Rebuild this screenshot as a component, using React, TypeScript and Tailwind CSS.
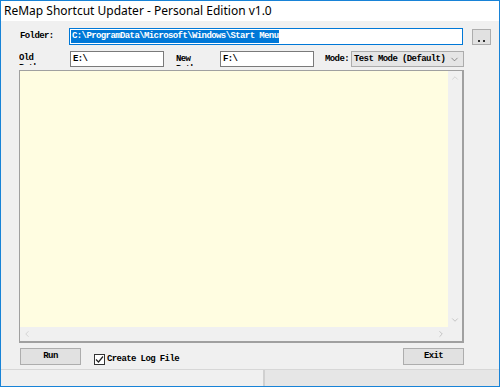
import { ChevronDown, ChevronUp, ChevronLeft, ChevronRight } from "lucide-react";

const mono = "font-['Liberation_Mono',monospace] text-[9px] font-bold tracking-[-0.6px] text-black";

export default function App() {
  return (
    <div className="w-[500px] h-[387px] border border-[#1883d7] bg-[#f0f0f0] flex flex-col overflow-hidden">
      {/* title bar */}
      <div className="h-[20px] bg-white flex items-center pl-[3px]">
        <span className="font-['Noto_Sans',sans-serif] text-[12px] leading-none text-black">
          ReMap Shortcut Updater - Personal Edition v1.0
        </span>
      </div>

      <div className="flex flex-col pl-[18px] grow">
        {/* folder row */}
        <div className="flex mt-[7px] h-[17px]">
          <div className={`${mono} w-[50px] pt-[4px] pl-[1px] leading-none`}>Folder:</div>
          <div className="w-[394px] h-[17px] bg-white border border-[#0078d7] flex items-center pl-[1px]">
            <span className={`${mono} bg-[#0078d7] leading-[13px] px-[1px]`}>
              <span className="text-white">C:\ProgramData\Microsoft\Windows\Start Menu</span>
            </span>
          </div>
          <button className="ml-[9px] mt-[1px] w-[19px] h-[16px] bg-[#e1e1e1] border border-[#adadad] flex items-end justify-center pb-[2px]">
            <span className="flex gap-[3px]">
              <span className="w-[2px] h-[2px] bg-[#333]" />
              <span className="w-[2px] h-[2px] bg-[#333]" />
            </span>
          </button>
        </div>

        {/* second row */}
        <div className="flex mt-[6px] h-[16px]">
          <div className="w-[51px] h-[16px]">
            <div className={`${mono} w-[24px] h-[14px] pt-[2px] leading-[10px] overflow-hidden`}>Old Path</div>
          </div>
          <div className="w-[94px] h-[16px] bg-white border border-[#7a7a7a] flex items-center pl-[2px]">
            <span className={`${mono} leading-none`}>E:\</span>
          </div>
          <div className="ml-[12px] w-[44px] h-[16px]">
            <div className={`${mono} w-[24px] h-[15px] pt-[3px] leading-[10px] overflow-hidden`}>New Path</div>
          </div>
          <div className="w-[94px] h-[16px] bg-white border border-[#7a7a7a] flex items-center pl-[2px]">
            <span className={`${mono} leading-none`}>F:\</span>
          </div>
          <div className={`${mono} ml-[11px] w-[26px] pt-[4px] leading-none`}>Mode:</div>
          <div className="w-[113px] h-[16px] bg-[#e5e5e5] border border-[#acacac] flex items-center justify-between pl-[2px] pr-[3px]">
            <span className={`${mono} leading-none`}>Test Mode (Default)</span>
            <ChevronDown size={11} strokeWidth={1.5} className="text-[#606060]" />
          </div>
        </div>

        {/* log area */}
        <div className="mt-[3px] w-[445px] h-[273px] border border-[#a0a0a0] border-b-2 border-r-2 bg-[#f0f0f0] grid grid-cols-[1fr_14px] grid-rows-[1fr_14px]">
          <div className="bg-[#fffde1]" />
          <div className="flex flex-col justify-between items-center py-[2px]">
            <ChevronUp size={10} strokeWidth={1.5} className="text-[#c2c2c2]" />
            <ChevronDown size={10} strokeWidth={1.5} className="text-[#a8a8a8]" />
          </div>
          <div className="flex justify-between items-center px-[2px]">
            <ChevronLeft size={10} strokeWidth={1.5} className="text-[#c2c2c2]" />
            <ChevronRight size={10} strokeWidth={1.5} className="text-[#a8a8a8]" />
          </div>
          <div className="bg-[#f0f0f0]" />
        </div>

        {/* buttons */}
        <div className="flex mt-[5px] h-[17px] items-start">
          <button className="ml-[1px] w-[61px] h-[17px] bg-[#e1e1e1] border border-[#adadad] flex items-center justify-center">
            <span className={`${mono} leading-none`}>Run</span>
          </button>
          <div className="ml-[13px] mt-[6px] flex items-center">
            <span className="w-[11px] h-[11px] border border-[#333] bg-white flex items-center justify-center">
              <svg width="9" height="9" viewBox="0 0 9 9">
                <path d="M1 4.5 L3.5 7 L8 1.5" fill="none" stroke="#222" strokeWidth="1.2" />
              </svg>
            </span>
            <span className={`${mono} leading-none ml-[2px]`}>Create Log File</span>
          </div>
          <button className="ml-auto mr-[35px] w-[61px] h-[17px] bg-[#e1e1e1] border border-[#adadad] flex items-center justify-center">
            <span className={`${mono} leading-none`}>Exit</span>
          </button>
        </div>
      </div>

      {/* status bar */}
      <div className="h-[17px] border-t border-[#d7d7d7] flex">
        <div className="w-[264px] bg-[#f0f0f0] border-r-2 border-[#d0d0d0]" />
        <div className="grow bg-[#e6e6e6]" />
      </div>
    </div>
  );
}
